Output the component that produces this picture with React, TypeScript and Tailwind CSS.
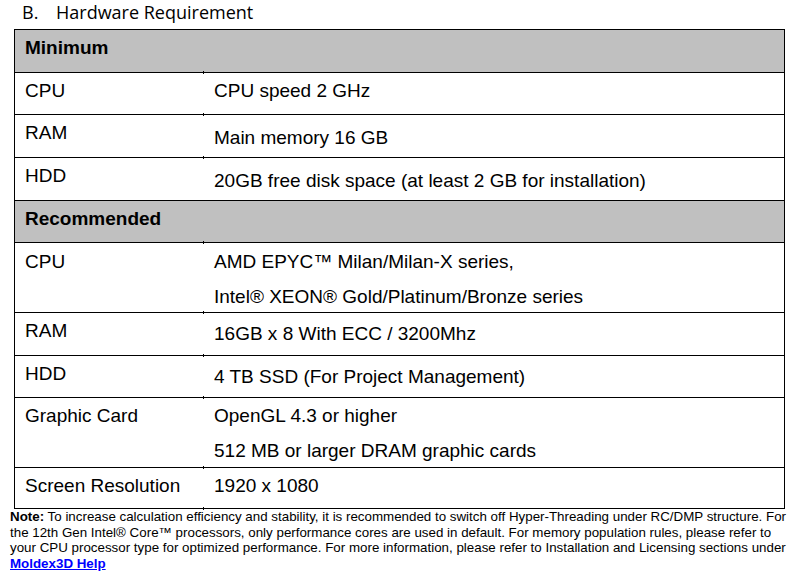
import * as React from "react";

type Row =
  | { kind: "head"; label: string; h: string }
  | {
      kind: "item";
      label: string;
      lines: string[];
      h: string;
      pad?: string;
      valuePad?: string;
    };

const ROWS: Row[] = [
  { kind: "head", label: "Minimum", h: "h-[43px]" },
  { kind: "item", label: "CPU", lines: ["CPU speed 2 GHz"], h: "h-[42px]" },
  { kind: "item", label: "RAM", lines: ["Main memory 16 GB"], h: "h-[43px]", valuePad: "pt-[5px]" },
  {
    kind: "item",
    label: "HDD",
    lines: ["20GB free disk space (at least 2 GB for installation)"],
    h: "h-[43px]",
    valuePad: "pt-[5px]",
  },
  { kind: "head", label: "Recommended", h: "h-[42px]" },
  {
    kind: "item",
    label: "CPU",
    lines: ["AMD EPYC™ Milan/Milan-X series,", "Intel® XEON® Gold/Platinum/Bronze series"],
    h: "h-[70px]",
    pad: "pt-[1px]",
    valuePad: "pt-[1px]",
  },
  { kind: "item", label: "RAM", lines: ["16GB x 8 With ECC / 3200Mhz"], h: "h-[43px]", valuePad: "pt-[3px]" },
  {
    kind: "item",
    label: "HDD",
    lines: ["4 TB SSD (For Project Management)"],
    h: "h-[42px]",
    valuePad: "pt-[3px]",
  },
  {
    kind: "item",
    label: "Graphic Card",
    lines: ["OpenGL 4.3 or higher", "512 MB or larger DRAM graphic cards"],
    h: "h-[70px]",
  },
  { kind: "item", label: "Screen Resolution", lines: ["1920 x 1080"], h: "h-[42px]" },
];

function TableRow({ row, last }: { row: Row; last: boolean }) {
  if (row.kind === "head") {
    return (
      <div className={`relative flex border-t border-black bg-[#c0c0c0] ${row.h}`}>
        <div className="pl-[10px] text-[19px] font-bold leading-[35px]">{row.label}</div>
      </div>
    );
  }
  return (
    <div className={`relative flex border-t border-black ${last ? "border-b" : ""} ${row.h}`}>
      {/* little column tick where the row rule meets the cell edge */}
      <span className="absolute left-[188px] top-[-2px] h-[3px] w-px bg-black" />
      <div className={`w-[189px] shrink-0 pl-[10px] leading-[35px] ${row.pad ?? ""}`}>{row.label}</div>
      <div className={`flex flex-col pl-[10px] leading-[35px] ${row.valuePad ?? ""}`}>
        {row.lines.map((line) => (
          <span key={line} className="whitespace-nowrap">
            {line}
          </span>
        ))}
      </div>
      {last ? <span className="absolute bottom-[-2px] left-[188px] h-[3px] w-px bg-black" /> : null}
    </div>
  );
}

export default function App() {
  return (
    <div className="h-[587px] w-[787px] overflow-hidden bg-white text-black font-['Liberation_Sans',Arial,sans-serif]">
      <div className="flex h-[29px] pl-[22px] font-['Open_Sans',sans-serif] text-[18px] leading-[24px] text-black">
        <span className="w-[34px]">B.</span>
        <span>Hardware Requirement</span>
      </div>

      <div className="ml-[14px] w-[771px] border-x border-black text-[19px]">
        {ROWS.map((row, i) => (
          <TableRow key={i} row={row} last={i === ROWS.length - 1} />
        ))}
      </div>

      <p className="pl-[10px] text-[13.35px] leading-[15.5px] whitespace-nowrap">
        <b>Note:</b> To increase calculation efficiency and stability, it is recommended to switch off
        Hyper-Threading under RC/DMP structure. For
        <br />
        the 12th Gen Intel® Core™ processors, only performance cores are used in default. For memory
        population rules, please refer to
        <br />
        your CPU processor type for optimized performance. For more information, please refer to
        Installation and Licensing sections under
        <br />
        <a href="#" className="font-bold text-[#0000ff] underline">
          Moldex3D Help
        </a>
      </p>
    </div>
  );
}
